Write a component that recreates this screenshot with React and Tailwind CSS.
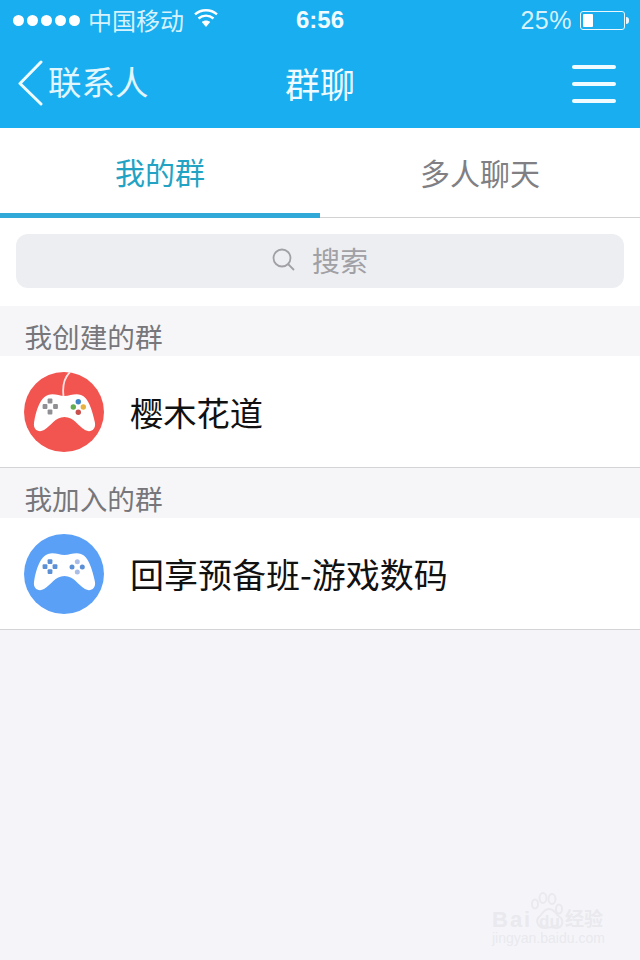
const cjk = "font-['Noto_Sans_CJK_SC','Liberation_Sans',sans-serif]";

function Pad({ body, dots, cord, shift }) {
  return (
    <svg width="80" height="80" viewBox="0 0 80 80" className="shrink-0">
      <circle cx="40" cy="40" r="40" fill={body} />
      {cord && <path d="M46 0 C 41 5, 38 12, 39.5 24" stroke="#fbe3e3" strokeWidth="1.8" fill="none" />}
      <path d="M24 24 C 30 22, 35 25, 40.5 25 C 46 25, 51 22, 57 24 C 64 26, 68 38, 71 52 C 72 59, 66 62, 61 59 C 54 55, 50 46, 40.5 46 C 31 46, 27 55, 20 59 C 15 62, 9 59, 10 52 C 12 38, 17 26, 24 24 Z" fill="#fff" transform={`translate(0,${shift})`} />
      {dots.map((d, i) => <rect key={i} x={d[0] - d[3]} y={d[1] - d[3]} width={d[3] * 2} height={d[3] * 2} rx={d[4] ? d[3] : 1} fill={d[2]} />)}
    </svg>
  );
}

const redDots = [
  [26, 29, "#8f8f94", 2.4], [21, 34.5, "#8f8f94", 2.4], [31.5, 34.5, "#8f8f94", 2.4], [26, 40, "#8f8f94", 2.4],
  [54.3, 29.7, "#3f86c6", 2.7, 1], [49.3, 35, "#62ad4d", 2.7, 1], [59.3, 35, "#e8b33c", 2.7, 1], [54.3, 40.3, "#c9504c", 2.7, 1],
];
const blueDots = [
  [26, 27.7, "#5b8fd6", 2.4], [21, 32.7, "#5b8fd6", 2.4], [31, 32.7, "#5b8fd6", 2.4], [26, 37.7, "#5b8fd6", 2.4],
  [53.3, 27.7, "#a9bde6", 2.5, 1], [48, 33, "#5b8fd6", 2.5, 1], [58.3, 33, "#5b8fd6", 2.5, 1], [53.3, 38, "#a9bde6", 2.5, 1],
];

function Row({ name, body, dots, cord, shift, size }) {
  return (
    <div className="h-[112px] bg-white border-b border-[#d4d4d6] flex items-center pl-6 gap-[26px]">
      <Pad body={body} dots={dots} cord={cord} shift={shift} />
      <span className={`${size} leading-none text-[#111]`}>{name}</span>
    </div>
  );
}

function Section({ title }) {
  return (
    <div className="h-[50px] bg-[#f6f6f8] pl-[24.5px] pt-[15px] text-[27.6px] leading-[30px] text-[#77777b]">{title}</div>
  );
}

export default function App() {
  return (
    <div className={`${cjk} w-[640px] h-[960px] bg-[#f5f5f9] overflow-hidden relative flex flex-col`}>
      <div className="h-[128px] shrink-0 bg-[#18aeef] text-[#e9f8fe] flex flex-col">
        <div className="h-10 flex items-center px-[13px] relative">
          <div className="flex gap-[3px]">
            {[0, 1, 2, 3, 4].map(i => <span key={i} className="w-[11px] h-[11px] rounded-full bg-white" />)}
          </div>
          <span className="ml-[8px] text-[24px] leading-none text-[#d6f2fd]">中国移动</span>
          <svg width="26" height="20" viewBox="0 0 26 20" className="ml-[9px] -mt-1">
            <path d="M13 19 L8.8 14 C11.2 12 14.8 12 17.2 14 Z" fill="#fff" />
            <path d="M5.5 10.5 C9.8 6.7 16.2 6.7 20.5 10.5" stroke="#fff" strokeWidth="2.4" fill="none" />
            <path d="M2 6.3 C8.2 .8 17.8 .8 24 6.3" stroke="#fff" strokeWidth="2.4" fill="none" />
          </svg>
          <span className="absolute left-[296px] top-[6px] text-[24px] leading-[28px] font-semibold font-['Liberation_Sans'] text-[#f0fbff]">6:56</span>
          <div className="ml-auto flex items-center -mr-[2px]">
            <span className="text-[25px] leading-none font-['Liberation_Sans'] tracking-[0.5px] text-[#d6f2fd]">25%</span>
            <div className="ml-[8px] w-[45px] h-[19px] border border-[#e9f8fe] rounded-[3px] p-[2px]">
              <div className="w-[10px] h-full bg-white rounded-[1px]" />
            </div>
            <div className="ml-[1px] w-[3px] h-[7px] bg-[#e9f8fe] rounded-r-sm" />
          </div>
        </div>
        <div className="h-[88px] flex items-center relative pb-[2px]">
          <svg width="28" height="46" viewBox="0 0 28 46" className="ml-[17px]">
            <path d="M24 2 L3 23.5 L24 44" stroke="#f0fbff" strokeWidth="3" fill="none" strokeLinecap="round" strokeLinejoin="round" />
          </svg>
          <span className="ml-[3px] -mt-[5px] text-[33.5px] leading-none text-[#e2f6fe]">联系人</span>
          <span className="absolute left-0 right-0 -mt-[2px] text-center text-[35px] leading-none text-[#f0fbff]">群聊</span>
          <div className="ml-auto mr-6 mt-[2px] w-[44px] flex flex-col gap-[13px]">
            <div className="h-1 rounded-full bg-[#f0fbff]" />
            <div className="h-1 rounded-full bg-[#f0fbff]" />
            <div className="h-1 rounded-full bg-[#f0fbff]" />
          </div>
        </div>
      </div>

      <div className="h-[90px] shrink-0 bg-white flex border-b border-[#d2d2d4] text-[30px] leading-none">
        <div className="w-[320px] -mb-px border-b-[5px] border-[#31a9d8] flex items-center justify-center text-[#22a3c4]">我的群</div>
        <div className="w-[320px] flex items-center justify-center text-[#808084] pb-[2px]">多人聊天</div>
      </div>

      <div className="h-[88px] shrink-0 bg-white px-4 pt-4">
        <div className="h-[54px] rounded-xl bg-[#edeef1] flex items-center justify-center text-[#a0a0a5]">
          <svg width="24" height="24" viewBox="0 0 24 24" className="-mt-[3px]">
            <circle cx="10" cy="10" r="8.5" stroke="#a0a0a5" strokeWidth="1.8" fill="none" />
            <path d="M16 16 L22 22" stroke="#a0a0a5" strokeWidth="1.8" />
          </svg>
          <span className="ml-4 -mt-[3px] text-[28px] leading-none">搜索</span>
        </div>
      </div>

      <Section title="我创建的群" />
      <Row name="樱木花道" body="#f25450" dots={redDots} cord shift={-1} size="text-[33.25px]" />
      <Section title="我加入的群" />
      <Row name="回享预备班-游戏数码" body="#5aa0f7" dots={blueDots} shift={-4} size="text-[34px]" />

      <div className="absolute left-[491px] top-[889px] w-[120px] h-[62px] text-[#e9e9ee]">
        <svg width="36" height="38" viewBox="0 0 36 38" className="absolute left-[39px] top-[3px]">
          <ellipse cx="5" cy="12" rx="3" ry="4.5" fill="none" stroke="#e9e9ee" strokeWidth="2" />
          <ellipse cx="13" cy="6" rx="3.5" ry="5" fill="none" stroke="#e9e9ee" strokeWidth="2" />
          <ellipse cx="22" cy="7" rx="3.5" ry="5" fill="none" stroke="#e9e9ee" strokeWidth="2" />
          <ellipse cx="29" cy="17" rx="3" ry="4.5" fill="none" stroke="#e9e9ee" strokeWidth="2" />
          <path d="M19 17 C13 17 13 22 9 25 C5 29 8 36 15 36 C19 35 23 35 26 36 C32 36 34 30 31 26 C26 23 25 17 19 17 Z" fill="none" stroke="#e9e9ee" strokeWidth="2" />
        </svg>
        <span className="absolute left-[1px] top-[17px] text-[22px] leading-[28px] tracking-[2px] font-bold font-['Liberation_Sans']">Bai</span>
        <span className="absolute left-[48px] top-[24px] text-[17px] leading-[18px] font-bold font-['Liberation_Sans']">du</span>
        <span className="absolute left-[74px] top-[17px] text-[19px] leading-[24px] font-bold whitespace-nowrap">经验</span>
        <span className="absolute left-[1px] top-[41px] text-[14px] leading-[16px] font-['Liberation_Sans'] whitespace-nowrap">jingyan.baidu.com</span>
      </div>
    </div>
  );
}
